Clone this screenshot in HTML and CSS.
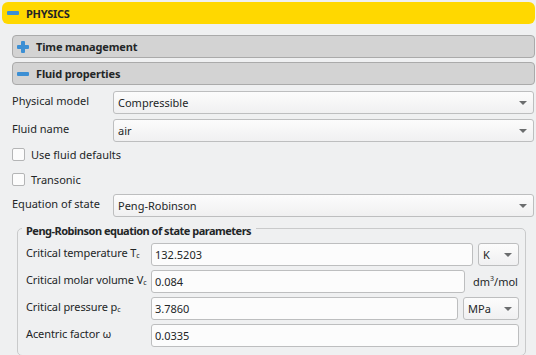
FILE: index.html
```html
<!DOCTYPE html>
<html lang="en">
<head>
    <meta charset="UTF-8">
    <meta name="viewport" content="width=device-width, initial-scale=1.0">
    <title>Physics</title>
    <link rel="stylesheet" href="styles.css">
</head>
<body>
    <div class="panel">
        <div class="section-header">
            <span class="icon-minus"></span>
            <span>PHYSICS</span>
        </div>

        <div class="sub">
            <div class="sub-bar first">
                <span class="icon-plus"></span>
                <span>Time management</span>
            </div>
            <div class="sub-bar">
                <span class="icon-minus"></span>
                <span>Fluid properties</span>
            </div>

            <div class="row first-row">
                <label class="label">Physical model</label>
                <div class="combo"><span>Compressible</span><span class="arrow"></span></div>
            </div>
            <div class="row">
                <label class="label">Fluid name</label>
                <div class="combo"><span>air</span><span class="arrow"></span></div>
            </div>

            <div class="check-row">
                <span class="checkbox"></span>
                <span>Use fluid defaults</span>
            </div>
            <div class="check-row">
                <span class="checkbox"></span>
                <span>Transonic</span>
            </div>

            <div class="row eos-row">
                <label class="label">Equation of state</label>
                <div class="combo"><span>Peng-Robinson</span><span class="arrow"></span></div>
            </div>

            <div class="group">
                <div class="group-title">Peng-Robinson equation of state parameters</div>

                <div class="param">
                    <label class="param-label">Critical temperature T<sub>c</sub></label>
                    <div class="field">132.5203</div>
                    <div class="unit-combo unit-k"><span>K</span><span class="arrow"></span></div>
                </div>
                <div class="param">
                    <label class="param-label">Critical molar volume V<sub>c</sub></label>
                    <div class="field">0.084</div>
                    <span class="unit-text">dm<sup>3</sup>/mol</span>
                </div>
                <div class="param">
                    <label class="param-label">Critical pressure p<sub>c</sub></label>
                    <div class="field">3.7860</div>
                    <div class="unit-combo unit-mpa"><span>MPa</span><span class="arrow"></span></div>
                </div>
                <div class="param">
                    <label class="param-label">Acentric factor &omega;</label>
                    <div class="field">0.0335</div>
                </div>
            </div>
        </div>
    </div>
</body>
</html>
```

FILE: styles.css
```css
body {
    margin: 0;
    background: #eff0f1;
    font-family: "Noto Sans", "Open Sans", sans-serif;
    font-size: 11px;
    color: #232627;
}
.panel {
    padding: 2px 1px 0 2px;
}
.section-header {
    height: 22px;
    background: #ffd800;
    border-radius: 6px;
    display: flex;
    align-items: center;
    gap: 7px;
    padding-left: 5px;
    font-weight: bold;
    letter-spacing: -0.3px;
}
.icon-minus {
    width: 12px;
    height: 4px;
    border-radius: 1px;
    background: #3c8fd4;
}
.icon-plus {
    width: 12px;
    height: 12px;
    position: relative;
}
.icon-plus::before,
.icon-plus::after {
    content: "";
    position: absolute;
    background: #3c8fd4;
    border-radius: 1px;
}
.icon-plus::before {
    left: 0;
    top: 4px;
    width: 12px;
    height: 4px;
}
.icon-plus::after {
    left: 4px;
    top: 0;
    width: 4px;
    height: 12px;
}
.sub {
    margin-left: 10px;
}
.sub-bar {
    height: 23px;
    box-sizing: border-box;
    margin-top: 4px;
    background: #d3d3d3;
    border: 1px solid #aaaaaa;
    border-radius: 4px;
    display: flex;
    align-items: center;
    gap: 7px;
    padding-left: 4px;
    font-weight: bold;
    letter-spacing: -0.15px;
}
.sub-bar.first {
    margin-top: 11px;
}
.row {
    display: flex;
    align-items: center;
    margin-top: 5px;
    margin-right: 1px;
}
.first-row {
    margin-top: 6px;
}
.eos-row {
    margin-top: 2px;
}
.label {
    width: 101px;
    margin-top: -4px;
}
.combo,
.unit-combo {
    flex: 1;
    height: 23px;
    box-sizing: border-box;
    border: 1px solid #bdbebf;
    border-radius: 3px;
    background: linear-gradient(#fcfcfc, #f0f0f1);
    display: flex;
    align-items: center;
    justify-content: space-between;
    padding: 0 6px 0 4px;
}
.arrow {
    width: 0;
    height: 0;
    border-left: 4px solid transparent;
    border-right: 4px solid transparent;
    border-top: 4px solid #6b6d6e;
}
.check-row {
    height: 25px;
    display: flex;
    align-items: center;
    gap: 6px;
}
.checkbox {
    width: 13px;
    height: 13px;
    box-sizing: border-box;
    background: #fcfcfc;
    border: 1px solid #b4b5b6;
    border-radius: 2px;
}
.group {
    margin: 11px 9px 0 5px;
    border: 1px solid #c9cacb;
    border-radius: 5px;
    padding: 0 6px 8px 8px;
}
.group-title {
    width: fit-content;
    margin: -6px 0 0 -4px;
    padding: 0 5px 0 4px;
    background: #eff0f1;
    font-weight: bold;
    letter-spacing: -0.5px;
    line-height: 16px;
}
.param {
    display: flex;
    align-items: center;
    height: 23px;
    margin-top: 4px;
}
.param:first-of-type {
    margin-top: -3px;
}
.param-label {
    width: 125px;
    margin-top: -4px;
    white-space: nowrap;
    letter-spacing: -0.1px;
}
sub {
    font-size: 7px;
    vertical-align: -1px;
}
sup {
    font-size: 7px;
    vertical-align: 5px;
}
.field {
    flex: 1;
    height: 23px;
    box-sizing: border-box;
    border: 1px solid #bdbebf;
    border-radius: 3px;
    background: #fcfcfc;
    display: flex;
    align-items: center;
    padding-left: 3px;
}
.unit-combo {
    flex: none;
    margin-left: 5px;
}
.unit-k {
    width: 41px;
}
.unit-mpa {
    width: 56px;
}
.unit-text {
    margin-left: 8px;
    width: 46px;
}
```
